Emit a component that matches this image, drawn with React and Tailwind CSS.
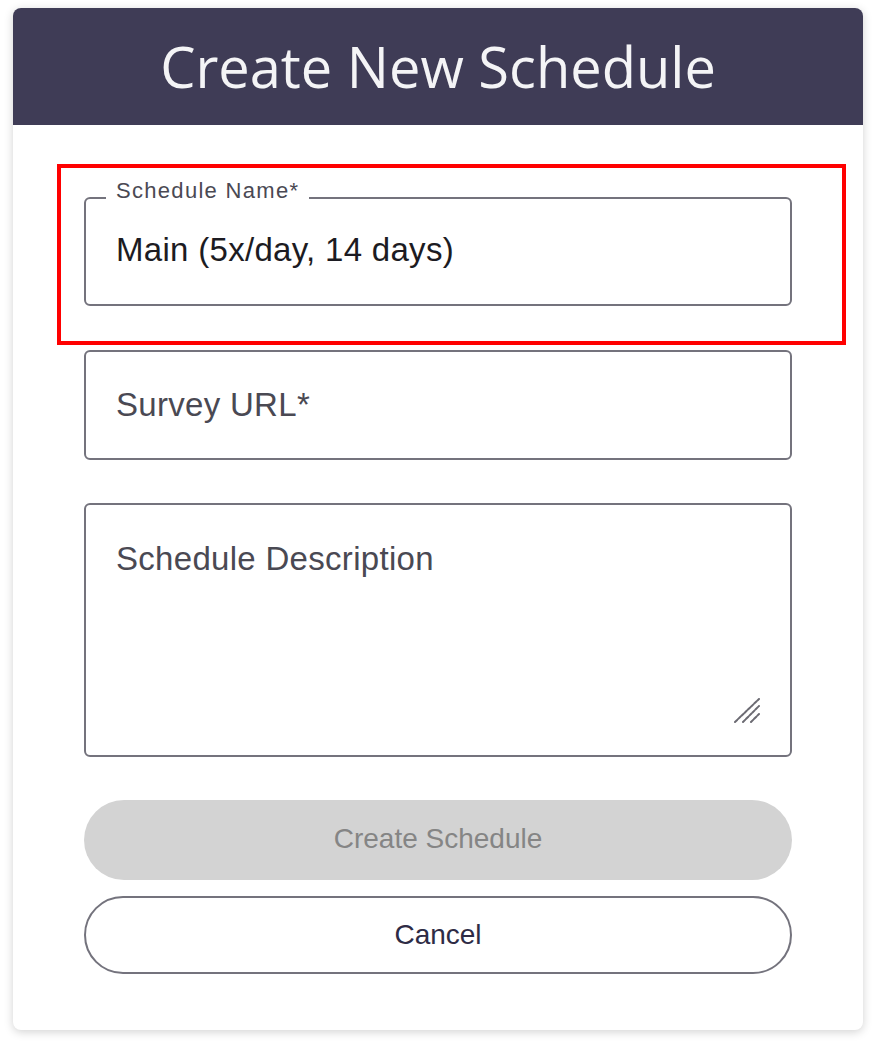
import React from 'react';

// Outlined text field, label floats on the top border when filled
function Field({ label, value, placeholder, height, padTop }) {
    return (
        <div className={`relative rounded-[6px] border-2 border-[#74737d] ${height}`}>
            {label && (
                <span className="absolute left-[20px] top-[-21px] bg-white px-[10px] text-[22px] leading-[26px] tracking-[1.3px] text-[#4a4953]">
                    {label}
                </span>
            )}
            <div className={`px-[30px] text-[33px] leading-[38px] tracking-[0.3px] ${padTop} ${value ? 'text-[#1c1b22]' : 'text-[#4a4953]'}`}>
                {value || placeholder}
            </div>
            {height === 'h-[254px]' && (
                <svg className="absolute right-[30px] bottom-[31px]" width="26" height="26" viewBox="0 0 26 26">
                    <g stroke="#6b6a72" strokeWidth="2" strokeLinecap="round" strokeDasharray="3 1.5">
                        <line x1="1" y1="24" x2="25" y2="1" />
                        <line x1="9" y1="24" x2="25" y2="8" />
                        <line x1="17" y1="24" x2="25" y2="16" />
                    </g>
                </svg>
            )}
        </div>
    );
}

export default function App() {
    return (
        <div className="min-h-[1046px] bg-white pt-[8px] px-[13px] font-['Liberation_Sans',Arial,sans-serif]">
            <div className="w-[850px] h-[1022px] rounded-[8px] bg-white shadow-[0_2px_10px_rgba(0,0,0,0.18)] overflow-hidden">
                {/* Header */}
                <div className="h-[117px] bg-[#3f3c56] flex items-center justify-center">
                    <h1 className="font-['Open_Sans',sans-serif] text-[56px] leading-none text-[#f4f4f6] pb-[2px]">
                        Create New Schedule
                    </h1>
                </div>

                {/* Form */}
                <div className="px-[71px] pt-[39px]">
                    <div className="ml-[-27px] mr-[-54px] border-4 border-[#ff0000] pl-[23px] pr-[50px] pt-[29px] pb-[35px]">
                        <Field label="Schedule Name*" value="Main (5x/day, 14 days)" height="h-[109px]" padTop="pt-[32px]" />
                    </div>
                    <div className="mt-[5px] flex flex-col gap-[43px]">
                        <Field placeholder="Survey URL*" height="h-[110px]" padTop="pt-[34px]" />
                        <Field placeholder="Schedule Description" height="h-[254px]" padTop="pt-[35px]" />
                    </div>
                    <div className="mt-[43px] flex flex-col gap-[16px]">
                        <button className="h-[80px] rounded-full bg-[#d3d3d3] text-[28px] text-[#858585] pb-[2px]">
                            Create Schedule
                        </button>
                        <button className="h-[78px] rounded-full border-2 border-[#74737d] bg-white text-[28px] text-[#2e2b45]">
                            Cancel
                        </button>
                    </div>
                </div>
            </div>
        </div>
    );
}
